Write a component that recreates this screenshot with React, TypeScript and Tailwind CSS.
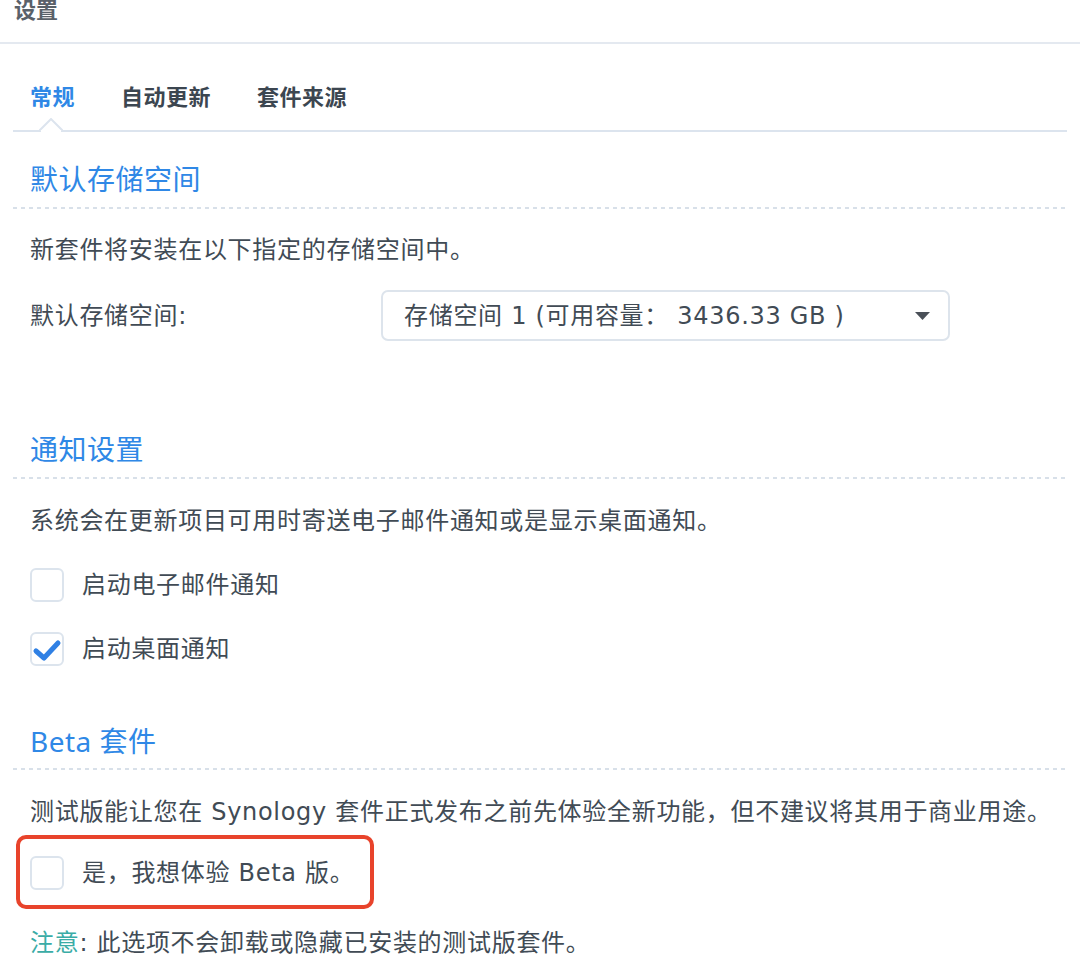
const body = 'text-[24px] leading-[34px] tracking-[0.7px] text-[#414b55]';
const bodyFont = { fontFamily: '"DejaVu Sans", "Noto Sans CJK SC", sans-serif' };

const Dashed = () => (
    <div className="h-[2px] w-full bg-[repeating-linear-gradient(to_right,#d8e0e9_0_4px,transparent_4px_8px)]" />
);

const Box = ({ checked = false }: { checked?: boolean }) => (
    <div className="relative h-[34px] w-[34px] shrink-0 rounded-[6px] border-2 border-[#dce4ed] bg-white">
        {checked && (
            <svg className="absolute -left-[2px] -top-[2px]" width="34" height="34" viewBox="0 0 34 34">
                <path
                    d="M6 19 L14 26 L28 11"
                    fill="none"
                    stroke="#2f80e4"
                    strokeWidth="5"
                    strokeLinecap="round"
                    strokeLinejoin="round"
                />
            </svg>
        )}
    </div>
);

const CheckRow = ({ label, checked }: { label: string; checked?: boolean }) => (
    <div className="flex items-center gap-[18px] pl-[17px]">
        <Box checked={checked} />
        <span className={body} style={bodyFont}>
            {label}
        </span>
    </div>
);

const Heading = ({ children }: { children: React.ReactNode }) => (
    <div className="pl-[17px] text-[28px] leading-[36px] tracking-[0.5px] text-[#2f88e6]">{children}</div>
);

export default function App() {
    return (
        <div
            className="h-[966px] w-[1080px] overflow-hidden bg-white"
            style={{ fontFamily: '"Noto Sans", "Noto Sans CJK SC", sans-serif' }}
        >
            <div className="flex h-[44px] flex-col border-b-2 border-[#e4e9f0]">
                <div className="-mt-[4px] pl-[14px] text-[22px] font-bold leading-[26px] text-[#5a6169]">设置</div>
            </div>

            <div className="px-[13px]">
                <div className="relative border-b-2 border-[#dce4ee] pb-[19px] pl-[17px] pt-[37px]">
                    <div className="flex gap-[46px] text-[22px] font-bold leading-[30px] tracking-[0.5px] text-[#3c4650]">
                        <span className="text-[#2f88e6]">常规</span>
                        <span>自动更新</span>
                        <span>套件来源</span>
                    </div>
                    <svg className="absolute -bottom-[2px] left-[26px]" width="24" height="14" viewBox="0 0 24 14">
                        <path d="M0 13 L12 1 L24 13" fill="white" stroke="#dce4ee" strokeWidth="2" />
                        <rect x="2" y="12" width="20" height="2" fill="white" />
                    </svg>
                </div>

                <div className="mt-[29px]">
                    <Heading>默认存储空间</Heading>
                    <div className="mt-[10px]">
                        <Dashed />
                    </div>
                    <div className={`mt-[24px] pl-[17px] ${body}`} style={bodyFont}>
                        新套件将安装在以下指定的存储空间中。
                    </div>
                    <div className={`mt-[23px] flex items-center pl-[17px] ${body}`} style={bodyFont}>
                        <span className="w-[351px]">默认存储空间:</span>
                        <div className="flex h-[51px] w-[569px] items-center justify-between rounded-[7px] border-2 border-[#dde4ec] pl-[21px] pr-[18px]">
                            <span>存储空间 1 (可用容量： 3436.33 GB )</span>
                            <svg width="15" height="8" viewBox="0 0 15 8">
                                <path d="M0 0 L15 0 L7.5 8 Z" fill="#4a5058" />
                            </svg>
                        </div>
                    </div>
                </div>

                <div className="mt-[90px]">
                    <Heading>通知设置</Heading>
                    <div className="mt-[10px]">
                        <Dashed />
                    </div>
                    <div className={`mt-[25px] pl-[17px] ${body}`} style={bodyFont}>
                        系统会在更新项目可用时寄送电子邮件通知或是显示桌面通知。
                    </div>
                    <div className="mt-[30px] flex flex-col gap-[30px]">
                        <CheckRow label="启动电子邮件通知" />
                        <CheckRow label="启动桌面通知" checked />
                    </div>
                </div>

                <div className="mt-[57px]">
                    <Heading>Beta 套件</Heading>
                    <div className="mt-[9px]">
                        <Dashed />
                    </div>
                    <div className={`mt-[25px] pl-[17px] ${body}`} style={bodyFont}>
                        测试版能让您在 Synology 套件正式发布之前先体验全新功能，但不建议将其用于商业用途。
                    </div>
                    <div className="ml-[3px] mt-[6px] flex h-[74px] w-[358px] items-center gap-[18px] rounded-[10px] border-4 border-[#e8432b] pl-[10px] pt-[2px]">
                        <Box />
                        <span className={body} style={bodyFont}>
                            是，我想体验 Beta 版。
                        </span>
                    </div>
                    <div className={`mt-[17px] pl-[17px] ${body}`} style={bodyFont}>
                        <span className="text-[#3aaca6]">注意</span>: 此选项不会卸载或隐藏已安装的测试版套件。
                    </div>
                </div>
            </div>
        </div>
    );
}
